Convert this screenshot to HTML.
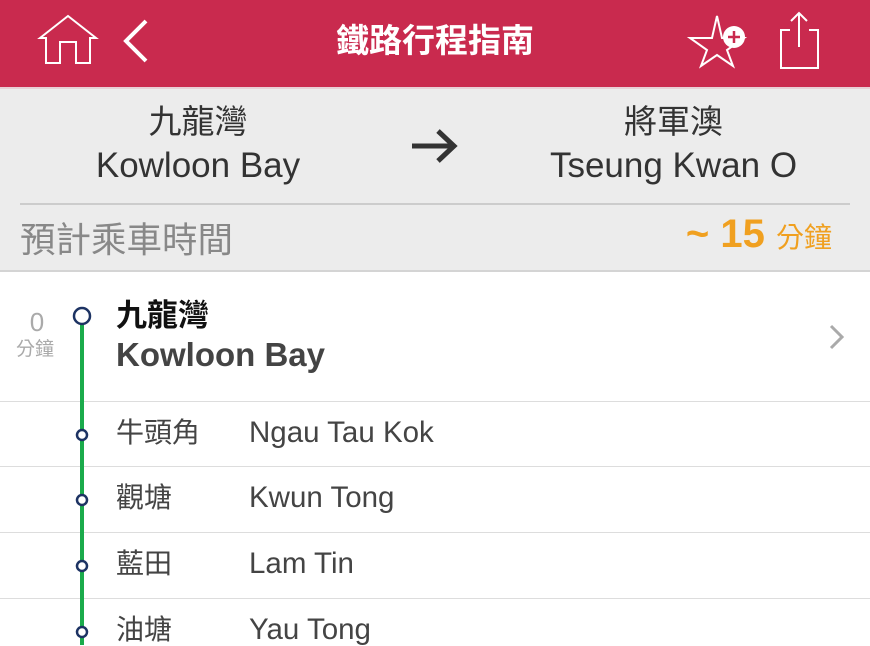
<!DOCTYPE html>
<html><head><meta charset="utf-8"><style>
body{margin:0;width:870px;height:645px;overflow:hidden;background:#fff;font-family:"Liberation Sans","Noto Sans CJK TC",sans-serif;position:relative}
.a{position:absolute;white-space:nowrap}
.r{position:absolute;white-space:nowrap;color:#444;font-size:28px;line-height:28px;height:28px}
.e{font-size:29.5px}
</style></head><body>
<div class="a" style="left:0;top:0;width:870px;height:87px;background:#c92a4e"></div>
<div class="a" style="left:0;top:87px;width:870px;height:2px;background:#e8d0d6"></div>
<svg class="a" style="left:0;top:0" width="870" height="87" fill="none" stroke="#fff" stroke-width="2.5">
<path d="M40 38 L68 16 L96 38 L90 38 L90 63 L76 63 L76 42 L60 42 L60 63 L46 63 L46 38 Z" stroke-width="2"/>
<path d="M146 21 L126 41 L146 61" stroke-width="4"/>
<path d="M717 16 L722 38 L744 38 L727 50 L733 66 L717 55 L701 66 L707 50 L690 38 L712 38 Z" stroke-width="2"/>
<circle cx="734" cy="37" r="11" fill="#fff" stroke="none"/>
<path d="M734 31v12M728 37h12" stroke="#c92a4e" stroke-width="2.5"/>
<path d="M790 30 L781 30 L781 68 L818 68 L818 30 L809 30" stroke-width="2"/>
<path d="M799 47 V13 M791 21 L799 13 L807 21" stroke-width="2"/>
</svg>
<div class="a" style="left:0;top:21px;width:870px;text-align:center;color:#fff;font-size:33px;line-height:40px;font-weight:bold">鐵路行程指南</div>
<div class="a" style="left:0;top:89px;width:870px;height:182px;background:#ececec"></div>
<div class="a" style="left:48px;top:102px;width:300px;text-align:center;color:#333;font-size:33px;line-height:40px">九龍灣</div>
<div class="a" style="left:48px;top:146px;width:300px;text-align:center;color:#333;font-size:35px;line-height:40px">Kowloon Bay</div>
<div class="a" style="left:520px;top:102px;width:307px;text-align:center;color:#333;font-size:33px;line-height:40px">將軍澳</div>
<div class="a" style="left:520px;top:146px;width:307px;text-align:center;color:#333;font-size:35px;line-height:40px">Tseung Kwan O</div>
<svg class="a" style="left:410px;top:128px" width="50" height="36" fill="none" stroke="#333" stroke-width="5"><path d="M2 18 H44 M28 3 L44 18 L28 33"/></svg>
<div class="a" style="left:20px;top:203px;width:830px;height:2px;background:#ccc"></div>
<div class="a" style="left:20px;top:222px;color:#888;font-size:35.5px;line-height:36px">預計乘車時間</div>
<div class="a" style="right:38px;top:212px;color:#f0a020;font-weight:bold;font-size:40px">~ 15 <span style="font-size:28px;font-weight:normal">分鐘</span></div>
<div class="a" style="left:0;top:270px;width:870px;height:2px;background:#d4d4d4"></div>
<div class="a" style="left:0;top:401px;width:870px;height:1px;background:#ddd"></div>
<div class="a" style="left:0;top:466px;width:870px;height:1px;background:#ddd"></div>
<div class="a" style="left:0;top:532px;width:870px;height:1px;background:#ddd"></div>
<div class="a" style="left:0;top:598px;width:870px;height:1px;background:#ddd"></div>
<div class="a" style="left:80px;top:322px;width:4px;height:323px;background:#1aab4b"></div>
<svg class="a" style="left:0;top:290px" width="120" height="355" fill="#fff" stroke="#1d3363" stroke-width="2.5">
<circle cx="82" cy="26" r="8"/><circle cx="82" cy="145" r="5"/><circle cx="82" cy="210" r="5"/><circle cx="82" cy="276" r="5"/><circle cx="82" cy="342" r="5"/>
</svg>
<div class="a" style="left:18px;top:307px;width:38px;text-align:center;color:#aaa;font-size:26px;line-height:30px">0</div>
<div class="a" style="left:16px;top:338px;color:#aaa;font-size:19px;line-height:24px">分鐘</div>
<div class="a" style="left:116px;top:298px;color:#111;font-size:31px;font-weight:bold;line-height:36px">九龍灣</div>
<div class="a" style="left:116px;top:336px;color:#444;font-size:33px;font-weight:bold;line-height:38px">Kowloon Bay</div>
<svg class="a" style="left:826px;top:323px" width="20" height="28" fill="none" stroke="#aaa" stroke-width="3"><path d="M5 3 L16 14 L5 25"/></svg>
<div class="r" style="left:116px;top:419px">牛頭角</div><div class="r e" style="left:249px;top:419px">Ngau Tau Kok</div>
<div class="r" style="left:116px;top:484px">觀塘</div><div class="r e" style="left:249px;top:484px">Kwun Tong</div>
<div class="r" style="left:116px;top:550px">藍田</div><div class="r e" style="left:249px;top:550px">Lam Tin</div>
<div class="r" style="left:116px;top:616px">油塘</div><div class="r e" style="left:249px;top:616px">Yau Tong</div>
</body></html>
